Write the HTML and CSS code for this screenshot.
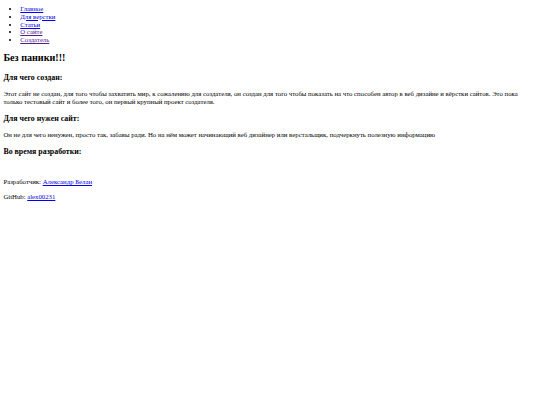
FILE: index.html
```html
<!DOCTYPE html>
<html lang="ru">
<head>
<meta charset="utf-8">
<title>Без паники!!!</title>
<link rel="stylesheet" href="styles.css">
</head>
<body class="page">
<nav class="nav">
  <ul class="nav-list">
    <li><a class="link" href="#main">Главное</a></li>
    <li><a class="link" href="#layout">Для верстки</a></li>
    <li><a class="link" href="#articles">Статьи</a></li>
    <li><a class="link visited" href="#about">О сайте</a></li>
    <li><a class="link visited" href="#creator">Создатель</a></li>
  </ul>
</nav>
<main class="content">
  <h2 class="title">Без паники!!!</h2>
  <h3 class="subtitle">Для чего создан:</h3>
  <p class="text">Этот сайт не создан, для того чтобы захватить мир, к сожалению для создателя, он создан для того чтобы показать на что способен автор в веб дизайне и вёрстки сайтов. Это пока только тестовый сайт и более того, он первый крупный проект создателя.</p>
  <h3 class="subtitle">Для чего нужен сайт:</h3>
  <p class="text">Он не для чего ненужен, просто так, забавы ради. Но на нём может начинающий веб дизайнер или верстальщик, подчеркнуть полезную информацию</p>
  <h3 class="subtitle">Во время разработки:</h3>
</main>
<footer class="footer">
  <p class="text">Разработчик: <a class="link" href="#dev">Александр Белан</a></p>
  <p class="text">GitHub: <a class="link" href="#gh">alex00231</a></p>
</footer>
</body>
</html>
```
FILE: styles.css
```css
html {
  background: #ffffff;
}
.page {
  margin: 0 3.375px 3.375px;
  font-family: "Liberation Serif", "Times New Roman", serif;
  font-size: 6.75px;
  line-height: 7.8px;
  color: #000000;
}
.nav-list {
  margin: 5px 0 6.75px;
  padding-left: 16.875px;
  list-style: disc;
}
.link {
  color: #0000ee;
  text-decoration: underline;
}
.link.visited {
  color: #551a8b;
}
.title {
  font-size: 10.125px;
  line-height: 11.8px;
  font-weight: bold;
  margin: 8.4px 0;
}
.subtitle {
  font-size: 7.9px;
  line-height: 9.6px;
  font-weight: bold;
  margin: 7.9px 0;
}
.text {
  margin: 6.75px 0;
}
.footer {
  padding-top: 7.4px;
}
```
